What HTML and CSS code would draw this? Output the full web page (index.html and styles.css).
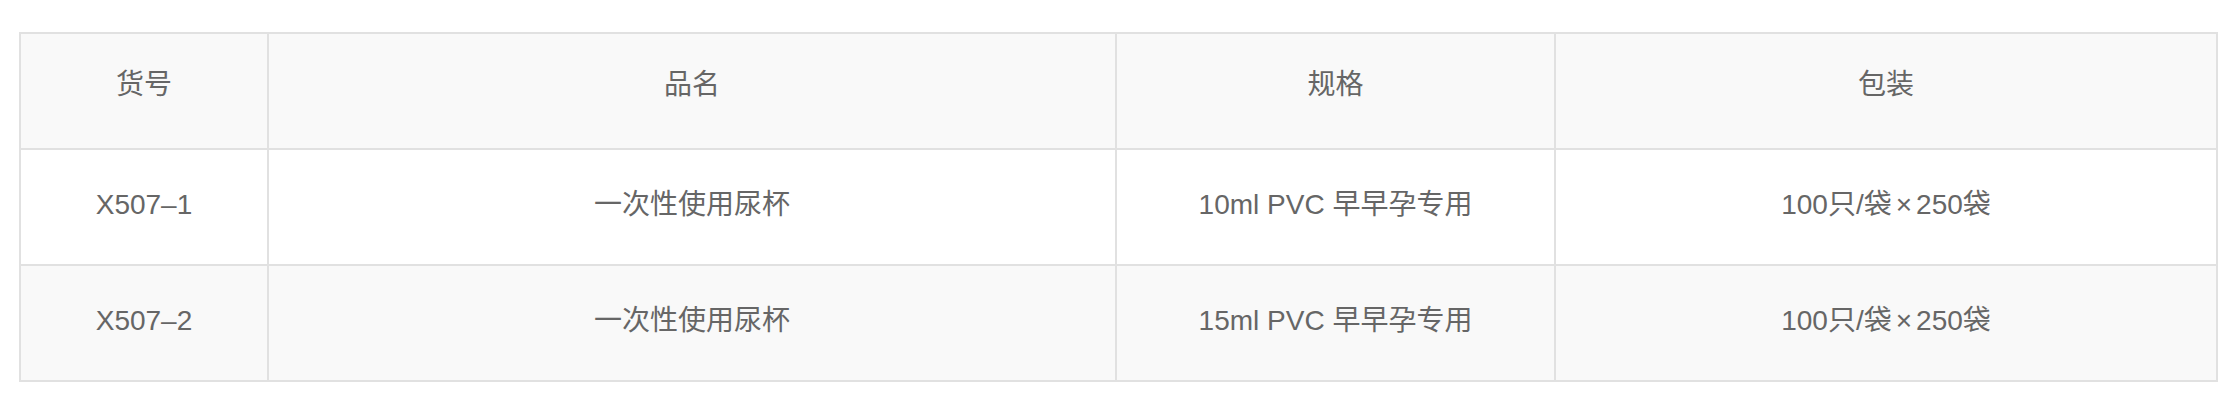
FILE: index.html
```html
<!DOCTYPE html>
<html lang="zh-CN">
<head>
<meta charset="utf-8">
<title>产品规格</title>
<link rel="stylesheet" href="styles.css">
</head>
<body>
<div class="page">
  <table class="spec">
    <colgroup>
      <col class="c1">
      <col class="c2">
      <col class="c3">
      <col class="c4">
    </colgroup>
    <thead>
      <tr class="row-alt">
        <th>货号</th>
        <th>品名</th>
        <th>规格</th>
        <th>包装</th>
      </tr>
    </thead>
    <tbody>
      <tr>
        <td>X507–1</td>
        <td>一次性使用尿杯</td>
        <td>10ml PVC 早早孕专用</td>
        <td>100只/袋<span class="times">×</span>250袋</td>
      </tr>
      <tr class="row-alt">
        <td>X507–2</td>
        <td>一次性使用尿杯</td>
        <td>15ml PVC 早早孕专用</td>
        <td>100只/袋<span class="times">×</span>250袋</td>
      </tr>
    </tbody>
  </table>
</div>
</body>
</html>
```

FILE: styles.css
```css
html, body {
  margin: 0;
  padding: 0;
  background: #ffffff;
}

.page {
  padding: 32px 0 0 19px;
}

.spec {
  width: 2199px;
  table-layout: fixed;
  border-collapse: separate;
  border-spacing: 0;
  border-top: 2px solid #e1e1e1;
  border-left: 2px solid #e1e1e1;
  font-family: "Liberation Sans", "Noto Sans CJK SC", sans-serif;
  font-size: 28px;
  color: #666666;
  background: #ffffff;
}

.c1 { width: 248px; }
.c2 { width: 848px; }
.c3 { width: 439px; }
.c4 { width: 662px; }

.spec th,
.spec td {
  box-sizing: border-box;
  border-right: 2px solid #e1e1e1;
  border-bottom: 2px solid #e1e1e1;
  text-align: center;
  vertical-align: middle;
  font-weight: normal;
  line-height: 40px;
  padding: 35px 0 39px;
  white-space: nowrap;
}

.spec th {
  padding: 31px 0 43px;
}

.times {
  margin: 0 4px;
}

.row-alt th,
.row-alt td {
  background: #f9f9f9;
}
```
